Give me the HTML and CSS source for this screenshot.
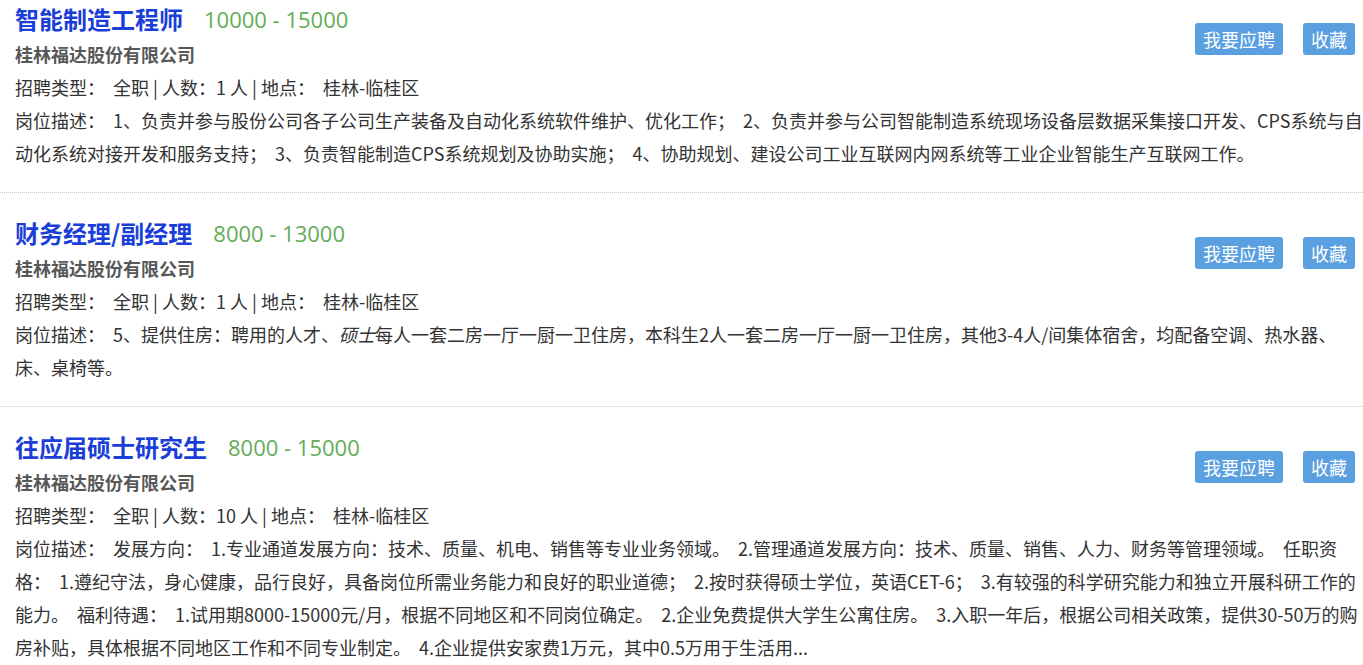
FILE: index.html
```html
<!DOCTYPE html>
<html lang="zh-CN">
<head>
<meta charset="utf-8">
<title>招聘</title>
<link rel="stylesheet" href="styles.css">
</head>
<body>
<div class="list">
  <div class="job">
    <div class="job-head">
      <div class="job-main">
        <div class="job-title"><span class="name">智能制造工程师</span><span class="salary">10000 - 15000</span></div>
        <div class="company">桂林福达股份有限公司</div>
        <div class="info">招聘类型：&nbsp; 全职 | 人数：1 人 | 地点：&nbsp; 桂林-临桂区</div>
      </div>
      <div class="actions"><a class="btn">我要应聘</a><a class="btn">收藏</a></div>
    </div>
    <div class="desc">岗位描述： 1、负责并参与股份公司各子公司生产装备及自动化系统软件维护、优化工作； 2、负责并参与公司智能制造系统现场设备层数据采集接口开发、CPS系统与自动化系统对接开发和服务支持； 3、负责智能制造CPS系统规划及协助实施； 4、协助规划、建设公司工业互联网内网系统等工业企业智能生产互联网工作。</div>
  </div>
  <div class="job">
    <div class="job-head">
      <div class="job-main">
        <div class="job-title"><span class="name">财务经理/副经理</span><span class="salary">8000 - 13000</span></div>
        <div class="company">桂林福达股份有限公司</div>
        <div class="info">招聘类型：&nbsp; 全职 | 人数：1 人 | 地点：&nbsp; 桂林-临桂区</div>
      </div>
      <div class="actions"><a class="btn">我要应聘</a><a class="btn">收藏</a></div>
    </div>
    <div class="desc">岗位描述： 5、提供住房：聘用的人才、<em>硕士</em>每人一套二房一厅一厨一卫住房，本科生2人一套二房一厅一厨一卫住房，其他3-4人/间集体宿舍，均配备空调、热水器、床、桌椅等。</div>
  </div>
  <div class="job">
    <div class="job-head">
      <div class="job-main">
        <div class="job-title"><span class="name">往应届硕士研究生</span><span class="salary">8000 - 15000</span></div>
        <div class="company">桂林福达股份有限公司</div>
        <div class="info">招聘类型：&nbsp; 全职 | 人数：10 人 | 地点：&nbsp; 桂林-临桂区</div>
      </div>
      <div class="actions"><a class="btn">我要应聘</a><a class="btn">收藏</a></div>
    </div>
    <div class="desc">岗位描述： 发展方向： 1.专业通道发展方向：技术、质量、机电、销售等专业业务领域。 2.管理通道发展方向：技术、质量、销售、人力、财务等管理领域。 任职资格： 1.遵纪守法，身心健康，品行良好，具备岗位所需业务能力和良好的职业道德； 2.按时获得硕士学位，英语CET-6； 3.有较强的科学研究能力和独立开展科研工作的能力。 福利待遇： 1.试用期8000-15000元/月，根据不同地区和不同岗位确定。 2.企业免费提供大学生公寓住房。 3.入职一年后，根据公司相关政策，提供30-50万的购房补贴，具体根据不同地区工作和不同专业制定。 4.企业提供安家费1万元，其中0.5万用于生活用...</div>
  </div>
</div>
</body>
</html>
```

FILE: styles.css
```css
html, body {
  margin: 0;
  padding: 0;
  background: #fff;
}
body {
  font-family: "Noto Sans CJK SC", "Noto Sans", sans-serif;
  font-size: 18px;
  color: #333;
  overflow: hidden;
}
.job {
  padding: 21px 0 22px 15px;
  border-bottom: 1px dotted #c8c8c8;
}
.job:first-child {
  padding-top: 0;
}
.job-head {
  display: flex;
  align-items: flex-start;
}
.job-main {
  flex: 1;
}
.job-title {
  display: flex;
  align-items: center;
  height: 38px;
  gap: 21px;
}
.name {
  font-size: 24px;
  font-weight: bold;
  color: #1a3ed8;
  line-height: 38px;
}
.salary {
  font-family: "Open Sans", "Noto Sans", sans-serif;
  font-size: 22px;
  color: #62ad55;
  line-height: 38px;
}
.company {
  font-weight: bold;
  color: #585858;
  line-height: 32px;
}
.info {
  line-height: 34px;
}
.actions {
  display: flex;
  gap: 20px;
  margin-top: 23px;
  margin-right: 8px;
}
.btn {
  display: block;
  background: #5a9fdf;
  color: #fff;
  font-size: 18px;
  line-height: 32px;
  height: 32px;
  padding: 0 8px;
  border-radius: 3px;
  cursor: pointer;
}
.desc {
  line-height: 33px;
  word-spacing: 4px;
}
.desc em {
  font-style: italic;
}
```
